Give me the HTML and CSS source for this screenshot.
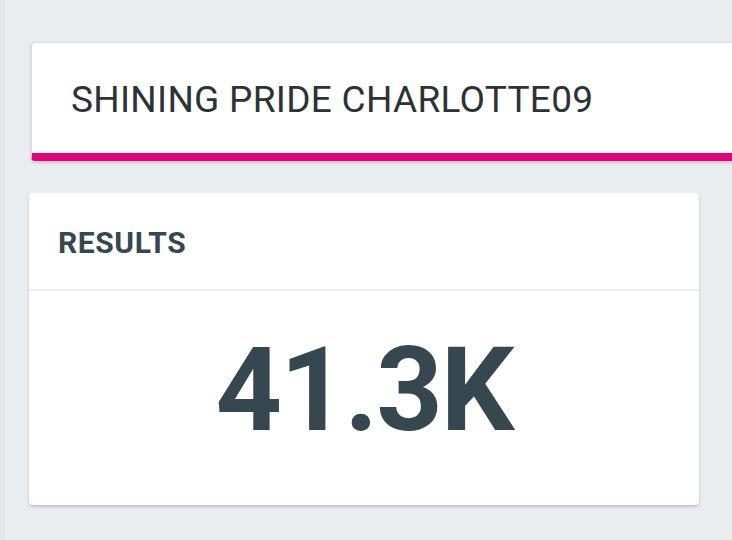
FILE: index.html
```html
<!DOCTYPE html>
<html>
<head>
<meta charset="utf-8">
<link rel="stylesheet" href="styles.css">
</head>
<body>
<div class="page">
  <div class="title-card">
    <div class="title-text">SHINING PRIDE CHARLOTTE09</div>
  </div>
  <div class="stat-card">
    <div class="stat-header">RESULTS</div>
    <div class="stat-body">
      <div class="stat-value">41.3K</div>
    </div>
  </div>
</div>
</body>
</html>
```

FILE: styles.css
```css
html, body {
  margin: 0;
  padding: 0;
  background: #e9edf0;
  font-family: Roboto, "Liberation Sans", sans-serif;
  overflow: hidden;
}
.page {
  width: 732px;
  height: 540px;
  box-sizing: border-box;
  border-left: 5px solid #e3e7ea;
  padding: 42px 0 0 24px;
  overflow: hidden;
}
.title-card {
  margin-left: 2px;
  width: 760px;
  height: 110px;
  box-sizing: content-box;
  background: #fff;
  border-top: 1px solid #d6dbdf;
  border-left: 1px solid #d6dbdf;
  border-bottom: 8px solid #e0057a;
  border-radius: 4px 0 0 4px;
  box-shadow: 0 2px 3px rgba(0,0,0,0.15);
  display: flex;
  align-items: center;
}
.title-text {
  padding-left: 39px;
  padding-top: 2px;
  font-size: 37px;
  letter-spacing: 0.3px;
  font-weight: 400;
  color: #2c3337;
}
.stat-card {
  margin-top: 32px;
  width: 670px;
  height: 312px;
  background: #fff;
  border-radius: 4px;
  box-shadow: 0 2px 3px rgba(0,0,0,0.18);
  display: flex;
  flex-direction: column;
}
.stat-header {
  height: 98px;
  box-sizing: border-box;
  border-bottom: 2px solid #eceef0;
  padding-left: 29px;
  display: flex;
  align-items: center;
  font-size: 30px;
  letter-spacing: 0.6px;
  font-weight: 700;
  color: #37474f;
  padding-top: 2px;
}
.stat-body {
  flex: 1;
  display: flex;
  justify-content: center;
  align-items: center;
  padding-bottom: 16px;
}
.stat-value {
  font-size: 116px;
  letter-spacing: -2px;
  font-weight: 700;
  color: #37474f;
  line-height: 1;
}
```
